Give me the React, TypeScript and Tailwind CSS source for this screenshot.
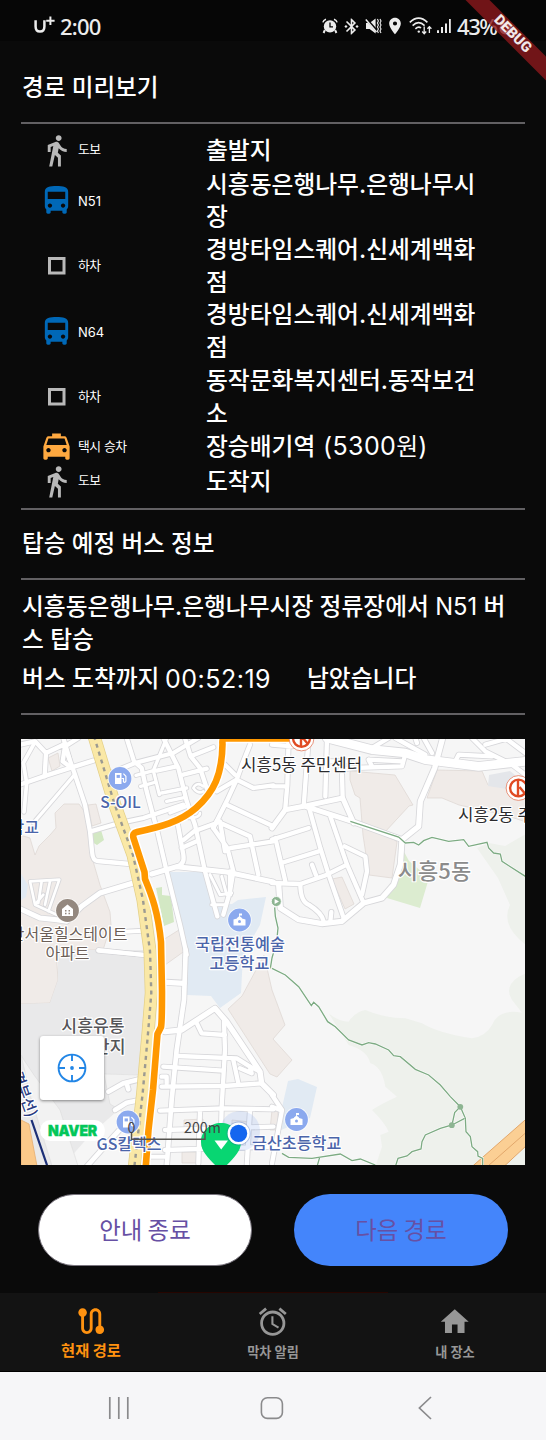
import React from "react";
import {
  MdAccessAlarm,
  MdBluetoothConnected,
  MdDirectionsBus,
  MdDirectionsWalk,
  MdHome,
  MdLocalTaxi,
  MdLocationOn,
  MdRoute,
} from "react-icons/md";

type Tile = "nw" | "ne" | "sw" | "se";
type Road = { t: Tile; d: string; w?: number };

const tileTransform: Record<Tile, string> = {
  nw: "translate(20 738) scale(0.33333)",
  ne: "translate(272 738) scale(0.33333)",
  sw: "translate(20 950) scale(0.33333)",
  se: "translate(272 950) scale(0.33333)",
};

const roads: Road[] = [
  { t: "nw", d: "M130 0L148 62L165 110L195 200L210 280L216 340Q218 368 232 369L330 378" },
  { t: "nw", d: "M0 140L80 112L165 85L220 68" },
  { t: "nw", d: "M162 112L100 185L40 255", w: 10 },
  { t: "nw", d: "M45 12L10 75L20 135L12 222", w: 11 },
  { t: "nw", d: "M0 20L45 10L78 45L74 115M78 45L135 18M175 0L135 25L148 62M135 25L128 70L148 85" },
  { t: "nw", d: "M320 0L342 70L365 90L380 160L412 280L440 400L480 560L500 650" },
  { t: "nw", d: "M265 108L345 75L460 45L535 0" },
  { t: "nw", d: "M430 0L475 90L500 190L525 260L555 400L592 535" },
  { t: "nw", d: "M348 112L400 98M362 145L408 132M440 0L400 98L418 170M425 165L500 150M440 190L495 178M450 225L500 205", w: 10 },
  { t: "nw", d: "M495 0L512 55L540 90L560 150M512 55L580 28M410 98L470 85M490 110L560 92" },
  { t: "nw", d: "M212 280L288 258M300 255L370 240L490 200" },
  { t: "nw", d: "M395 408L470 386L620 402L760 432", w: 15 },
  { t: "nw", d: "M470 386Q495 380 490 350L470 240M492 305L522 280L590 255M485 330L530 310" },
  { t: "nw", d: "M590 160L650 125L700 150L760 142M650 125L620 190L580 270M690 20L668 75L650 125M615 80L645 110" },
  { t: "nw", d: "M580 270L622 330L640 400L630 460L610 530M620 200L760 265M590 250L690 295L715 410M632 330L760 310M600 250L615 340M630 400L630 470" },
  { t: "nw", d: "M505 240Q540 240 540 225M550 160Q535 170 520 150Q530 130 550 145", w: 8 },
  { t: "nw", d: "M570 410L600 470L635 465M575 500L615 500M605 415L620 470", w: 9 },
  { t: "nw", d: "M340 435L240 465L185 505L140 550L110 545L60 540L0 512", w: 15 },
  { t: "nw", d: "M30 430L118 425L85 520M30 430L45 500L110 530M65 430L55 495M90 430L75 500M45 500L70 470", w: 8 },
  { t: "nw", d: "M300 582L370 578M235 638L370 650", w: 12 },
  { t: "ne", d: "M165 0L300 35L400 45L460 65L620 85L760 70", w: 26 },
  { t: "ne", d: "M0 20L60 25M50 0L46 140L40 210M110 0L95 205M165 0L160 175M105 70L230 70M210 110L212 180" },
  { t: "ne", d: "M0 270L40 215L95 205L212 180L245 255M100 205L240 250L390 305", w: 15 },
  { t: "ne", d: "M110 205L145 330L170 410L215 540M175 235L225 380L275 495" },
  { t: "ne", d: "M0 305L110 270M28 375L140 340M10 300L40 430M0 435L85 438L160 412L225 380M120 380L132 412" },
  { t: "ne", d: "M85 438Q85 490 110 500Q150 525 155 550M175 550L178 522" },
  { t: "ne", d: "M20 440L25 510L80 545L150 557L210 550L275 495L330 480L365 440L385 380L390 305L440 265L445 190L488 90L512 0", w: 16 },
  { t: "ne", d: "M218 325L280 355L285 400L270 470" },
  { t: "ne", d: "M205 95L240 90L390 85L400 48M290 65L390 70M290 65L300 85M0 145L45 145" },
  { t: "ne", d: "M300 30L350 0M430 0L435 15M455 0L480 45M550 70L560 50L660 55M600 0L640 40L720 80L760 110M640 20L710 0M370 0L460 50M700 0L760 45" },
  { t: "sw", d: "M497 0L492 150L470 300L455 450L440 650", w: 14 },
  { t: "sw", d: "M440 97L492 100M435 245L485 240L585 175L620 215L720 365L725 400L760 435", w: 16 },
  { t: "sw", d: "M528 215L545 250L615 255M612 215L615 300L605 470L600 650M475 318L650 325L690 350L720 365" },
  { t: "sw", d: "M430 350L610 362M425 410L610 408L725 400M640 330L655 400M690 350L695 370L660 355M425 380L440 380L440 400" },
  { t: "sw", d: "M420 482L610 475L760 478M435 540L760 530M435 600L760 590M540 480L535 640M690 480L680 650" },
  { t: "sw", d: "M265 425L310 400L370 385M320 400L325 418M285 480L320 458L360 450", w: 14 },
  { t: "sw", d: "M200 650L280 560L330 505", w: 14 },
  { t: "sw", d: "M235 0L370 15M380 620L440 620", w: 12 },
  { t: "se", d: "M0 435L30 480L15 560L0 640M0 470L25 480" },
];

const trails: { t: Tile; d: string }[] = [
  { t: "ne", d: "M235 250L380 297L400 315L425 313L440 321L455 308L480 298L530 310L575 305L590 325L645 313L650 330L665 345L685 348L690 370L760 415" },
  { t: "ne", d: "M8 508L10 535L18 570L14 610L0 660L-5 691" },
  { t: "se", d: "M0 55L40 75L80 110L118 167L125 157L140 170L167 215L190 230L230 270L270 285L290 278L310 282L350 300L365 317L385 320L430 358L470 375L505 405L535 440L565 470L580 505L582 545L595 560L600 590L617 605L618 618L632 625L632 650" },
  { t: "se", d: "M565 470L548 488L540 525L505 535L460 555L450 575L447 597L420 605L405 618L378 625L370 650M540 525L578 505" },
  { t: "se", d: "M30 610L50 622L120 625L205 612L240 632L265 627L310 645M143 622L135 650" },
];

const mainRoad = "M94 736L114.5 804L133 855L143 900L150 951L151.3 993L148.3 1030L142.7 1093L134 1170";
const routeLine =
  "M292 738.5L224 738.5Q222 739 222.5 744C222 775 214 792 196 808C180 822 160 827 137 832Q132 833 133.5 838L144.5 872L145 879C152 896 158 912 161 942L162 992Q162 1022 161 1027L157.5 1034L153 1090L148.5 1130L145.5 1170";

type Label = {
  s: string;
  x: number;
  y: number;
  size: number;
  color: string;
  anchor?: "start" | "middle" | "end";
  weight?: number;
};

const labels: Label[] = [
  { s: "시흥5동 주민센터", x: 241, y: 771, size: 16.8, color: "#2b2b2e", weight: 400 },
  { s: "시흥2동 주민센터", x: 458, y: 820.5, size: 16.8, color: "#2b2b2e", weight: 400 },
  { s: "시흥5동", x: 434.5, y: 878.5, size: 22, color: "#8b8b8b", anchor: "middle" },
  { s: "S-OIL", x: 120.5, y: 808, size: 15.6, color: "#4b65aa", anchor: "middle" },
  { s: "중학교", x: 39, y: 833, size: 16, color: "#4b65aa", anchor: "end" },
  { s: "벽산서울힐스테이트", x: 127.5, y: 939.5, size: 16, color: "#6b5e57", anchor: "end", weight: 400 },
  { s: "아파트", x: 67.5, y: 959, size: 16, color: "#6b5e57", anchor: "middle", weight: 400 },
  { s: "국립전통예술", x: 240, y: 949.5, size: 16.3, color: "#4b65aa", anchor: "middle" },
  { s: "고등학교", x: 239.5, y: 968.5, size: 16.3, color: "#4b65aa", anchor: "middle" },
  { s: "시흥유통", x: 93, y: 1031.5, size: 17.2, color: "#555558", anchor: "middle" },
  { s: "상가단지", x: 125.5, y: 1053, size: 17.2, color: "#555558", anchor: "end" },
  { s: "GS칼텍스", x: 129, y: 1150, size: 16, color: "#4b65aa", anchor: "middle" },
  { s: "금산초등학교", x: 252, y: 1148.5, size: 16.2, color: "#4b65aa" },
];

function Poi({ x, y, color, children }: { x: number; y: number; color: string; children: React.ReactNode }) {
  return (
    <g transform={`translate(${x} ${y})`}>
      <circle r="12.2" fill="#fff" opacity="0.8" />
      <circle r="11.4" fill={color} />
      {children}
    </g>
  );
}

function Pump() {
  return (
    <g>
      <path d="M-5 -5.5h6.5v11h-6.5z" fill="#fff" />
      <path d="M-3.4 -3.6h3.3v3h-3.3z" fill="#8ba9ee" />
      <path d="M1.5 0h2v3.2q1.8 1.4 2.4 -.6V-2.2L3.4 -4.8" fill="none" stroke="#fff" strokeWidth="1.2" />
    </g>
  );
}

function School() {
  return (
    <g fill="#fff">
      <path d="M-6 -.5L-2.5 -1.5V-2L0 -4L2.5 -2V-1.5L6 -.5V5.5H-6z" />
      <path d="M-.5 -6.5h3v2h-2.2v2h-.8z" />
      <circle cy="1.5" r="1.5" fill="#8ba9ee" />
    </g>
  );
}

function Office({ x, y }: { x: number; y: number }) {
  return (
    <g transform={`translate(${x} ${y})`}>
      <circle r="12.4" fill="#fff" stroke="#e2795a" strokeWidth=".8" />
      <circle r="8.4" fill="none" stroke="#e04a22" strokeWidth="2.4" />
      <path d="M-.5 -8V8M1 -1L6 5" stroke="#e04a22" strokeWidth="2.4" fill="none" />
    </g>
  );
}

function MapCanvas() {
  return (
    <svg className="block h-full w-full" viewBox="21 739 504 426" preserveAspectRatio="none">
      <rect x="21" y="739" width="504" height="427" fill="#f6f6f6" />
      {/* land use */}
      <g stroke="#ddd6d1" strokeWidth=".7" fill="#f0ebe8">
        <path d="M20 835L30 838L35 855L39 846L50 835L56 828L55 813L64 804L79 804L84 811L91 835L93 861L100 885L110 912L111 925L103 950L56 950L58 980L50 1003L20 1004Z" />
        <path d="M48 758L58 753L60 766L52 771ZM88 805L96 804L101 823L92 826Z" />
        <path d="M350 771L395 775L413 805L409 806L385 832L397 842L392 878L369 875L363 835L360 798L355 795L350 780Z" />
        <path d="M437 770L482 771L488 785L526 790V822L505 815L459 805L442 798L427 798Z" />
        <path d="M332 879L342 877L354 904L345 909Z" />
        <path d="M264 955L272 990L285 1025L273 1039L292 1060L277 1077L270 1074L228 1009L242 996L256 970Z" />
        <path d="M163 940L182 928L186 950L165 965ZM184 1120L203 1119V1132L184 1133ZM232 1120L250 1122V1132H232ZM182 1152H200V1163H182ZM272 1110H278V1130H270Z" />
      </g>
      <path d="M58 950L144 950L149 993L141 1075L106 1074L116 1112L90 1135L62 1167L21 1167V1004L50 1003L58 980Z" fill="#e9e9ea" />
      <path d="M21 1055L31 1098L52 1166L78 1166L60 1110L34 1075L24 1060ZM104 1074L141 1075L137 1120L110 1104Z" fill="#f2f2f2" stroke="#dcdcdc" strokeWidth=".6" />
      <path d="M168 872L204 872L213 904L232 904L238 900L266 897L260 925L243 955L241 993L220 1008L211 996L187 995L184 950Z" fill="#e1eaf3" />
      <path d="M288 1081L298 1079L317 1087L310 1118L281 1130L278 1125ZM20 872L28 885L26 897L20 901Z" fill="#e1eaf3" />
      <path d="M489 775L510 771L526 784V792L488 786Z" fill="#e4e6ea" />
      <path d="M92 834L101 830L104 840L97 845L92 842ZM156 888L162 887V895L171 896L174 922L164 926Z" fill="#d3e8c4" />
      <path d="M402 848L409 861L429 878L420 908L387 898Z" fill="#dcecd0" />
      <path d="M477 848L489 843L505 846L526 834V945Q500 925 510 905L498 878Z" fill="#eef1ec" />
      <path
        transform={tileTransform.se}
        d="M170 190Q200 215 230 215Q250 185 280 180Q340 205 400 205L450 220Q500 250 600 265Q640 260 660 225Q680 175 750 188L720 150Q695 110 740 80L762 70V650H310L330 590L325 555L350 545Q340 520 300 480Q330 460 375 440L340 410Q330 350 295 340Q285 300 230 285Z"
        fill="#eef1ec"
      />
      <path transform={tileTransform.se} d="M600 650L765 505V585L690 655Z" fill="#fbcf94" stroke="#e2a76a" strokeWidth="3" />
      <path transform={tileTransform.se} d="M640 655L765 545" stroke="#e2a76a" strokeWidth="3" />
      <path d="M21 1120L29 1124L37 1166H21Z" fill="#fbc98a" stroke="#e6ad70" strokeWidth=".8" />

      {/* streets: casing first, then surface */}
      <g fill="none" stroke="#d7d7da" strokeLinejoin="round">
        {roads.map((r, i) => (
          <path key={i} transform={tileTransform[r.t]} d={r.d} strokeWidth={(r.w ?? 13) + 5} strokeLinecap="round" />
        ))}
      </g>
      <g fill="none" stroke="#ffffff" strokeLinejoin="round">
        {roads.map((r, i) => (
          <path key={i} transform={tileTransform[r.t]} d={r.d} strokeWidth={r.w ?? 13} strokeLinecap="round" />
        ))}
      </g>

      {/* walking trails */}
      {trails.map((p, i) => (
        <g key={i} transform={tileTransform[p.t]} fill="none">
          <path d={p.d} stroke="#fff" strokeWidth="7" />
          <path d={p.d} stroke="#7dab83" strokeWidth="4" />
        </g>
      ))}
      <g fill="#8db592">
        <circle cx="460.3" cy="1106.8" r="2.9" />
        <circle cx="451.8" cy="1125.2" r="2.9" />
        <circle cx="276.3" cy="901.5" r="5" stroke="#fff" strokeWidth=".8" />
        <path d="M274.6 899L279 901.5L274.6 904Z" fill="#fff" />
      </g>

      {/* arterial road */}
      <g fill="none">
        <path d={mainRoad} stroke="#e3cf87" strokeWidth="13" />
        <path d={mainRoad} stroke="#fae8a6" strokeWidth="11.6" />
        <path d={mainRoad} stroke="#9c9a91" strokeWidth="2.4" strokeDasharray="4 4.2" />
      </g>

      {/* railway */}
      <path d="M31.5 1120L48 1168" stroke="#1c2f77" strokeWidth="2.2" />

      {/* guidance route */}
      <g fill="none" strokeLinejoin="round">
        <path d={routeLine} stroke="#fff" strokeWidth="9.5" />
        <path d={routeLine} stroke="#ff9800" strokeWidth="6.6" />
      </g>

      <Poi x={120} y={778.5} color="#8ba9ee">
        <Pump />
      </Poi>
      <Poi x={128} y={1122} color="#8ba9ee">
        <Pump />
      </Poi>
      <Poi x={239.5} y={920} color="#8ba9ee">
        <School />
      </Poi>
      <Poi x={296.5} y={1119.5} color="#8ba9ee">
        <School />
      </Poi>
      <Poi x={67.5} y={910.5} color="#94887f">
        <path d="M-5.5 5.5V-1.5L0 -6L5.5 -1.5V5.5Z" fill="#fff" />
        <path d="M-2.5 -.5h1.5v1.5h-1.5zM1 -.5h1.5v1.5H1zM-2.5 2.3h1.5v1.5h-1.5zM1 2.3h1.5v1.5H1z" fill="#94887f" />
      </Poi>
      <Office x={301.5} y={738.5} />
      <Office x={518.5} y={788} />

      <g fontFamily="'Noto Sans CJK KR', sans-serif" stroke="#ffffff" strokeWidth="2.4" strokeLinejoin="round" style={{ paintOrder: "stroke" }}>
        {labels.map((l) => (
          <text key={l.s + l.x} x={l.x} y={l.y} fontSize={l.size} fontWeight={l.weight ?? 500} fill={l.color} textAnchor={l.anchor ?? "start"}>
            {l.s}
          </text>
        ))}
        <text transform="translate(11.5 1074) rotate(70)" fontSize="15" fontWeight="500" fill="#2b3c82">
          경부선)
        </text>
      </g>

      {/* destination marker and current position */}
      <circle cx="240" cy="1131" r="20" fill="#3b74e8" opacity=".12" />
      <path d="M201 1142C201 1131 210 1123 221 1123S241 1131 241 1142C241 1154 230 1160 221 1172C212 1160 201 1154 201 1142Z" fill="#08d672" />
      <path d="M214.5 1140.5H228L221.2 1149.5Z" fill="#fff" />
      <circle cx="238.6" cy="1133.4" r="12" fill="#1c4fb0" opacity=".25" />
      <circle cx="238.6" cy="1133.4" r="11" fill="#fff" />
      <circle cx="238.6" cy="1133.4" r="8.6" fill="#1466ef" />

      {/* scale bar */}
      <path d="M131.5 1133V1139.2H205V1133" fill="none" stroke="#55534f" strokeWidth="1.5" />
      <g fontFamily="'Noto Sans CJK KR', sans-serif" fontSize="14.2" fill="#444446">
        <text x="131.5" y="1132.5" textAnchor="middle">
          0
        </text>
        <text x="202.5" y="1132.5" textAnchor="middle">
          200m
        </text>
      </g>
    </svg>
  );
}

type Kind = "walk" | "bus" | "off" | "taxi";
const steps: { kind: Kind; label: string; place: string; fare?: string }[] = [
  { kind: "walk", label: "도보", place: "출발지" },
  { kind: "bus", label: "N51", place: "시흥동은행나무.은행나무시장" },
  { kind: "off", label: "하차", place: "경방타임스퀘어.신세계백화점" },
  { kind: "bus", label: "N64", place: "경방타임스퀘어.신세계백화점" },
  { kind: "off", label: "하차", place: "동작문화복지센터.동작보건소" },
  { kind: "taxi", label: "택시 승차", place: "장승배기역", fare: "5300" },
  { kind: "walk", label: "도보", place: "도착지" },
];

function StepIcon({ kind }: { kind: Kind }) {
  if (kind === "walk") return <MdDirectionsWalk className="-my-px size-[35px] text-[#b9b9b9]" />;
  if (kind === "bus") return <MdDirectionsBus className="-my-px size-[35px] text-[#0068b7]" />;
  if (kind === "taxi") return <MdLocalTaxi className="-my-px size-[35px] text-[#ffa940]" />;
  return (
    <svg className="-my-px size-[35px]" viewBox="0 0 35 35" fill="none" stroke="#b9b9b9" strokeWidth="3">
      <rect x="10.5" y="10.5" width="14.5" height="14.5" />
    </svg>
  );
}

function StatusBar() {
  return (
    <header className="relative h-[41px] shrink-0 bg-[#060606] font-['Noto_Sans','Noto_Sans_CJK_KR',sans-serif] font-medium text-[#ececec]">
      <div className="flex h-full items-center pt-[11px] pl-[34px]">
        <span className="flex w-[26px] items-center">
          <svg className="h-[20px] w-[22px]" viewBox="0 0 22 20" fill="none" stroke="currentColor">
            <path d="M1.6 4.2V10.5Q1.6 15.6 6 15.6T10.4 10.5V4.2" strokeWidth="2.5" />
            <path d="M16.4 .6V9M12.2 4.8H20.6" strokeWidth="2" />
          </svg>
        </span>
        <span className="w-[262px] text-[22px] leading-none tracking-[-0.8px]">2:00</span>
        <svg className="h-[16px] w-[16px]" viewBox="0 0 16 16" fill="currentColor">
          <circle cx="8" cy="8.4" r="6.2" />
          <path d="M2.8 12.2L1.6 15M13.2 12.2L14.4 15" stroke="currentColor" strokeWidth="2" />
          <path d="M.9 4.4Q1.4 2 4 1.2M15.1 4.4Q14.6 2 12 1.2" fill="none" stroke="currentColor" strokeWidth="1.5" />
          <path d="M8 4.6V8.8H11" fill="none" stroke="#060606" strokeWidth="1.3" />
        </svg>
        <MdBluetoothConnected className="ml-[4px] size-[19px]" />
        <svg className="ml-[4px] h-[16px] w-[17px]" viewBox="0 0 17 16" fill="currentColor">
          <path d="M1 5H4.6L10.6 .6V15.4L4.6 11H1Z" />
          <path d="M.6 .2L12.5 13.6" stroke="#060606" strokeWidth="2.6" />
          <path d="M.8 1.4L11.5 14" stroke="currentColor" strokeWidth="1.5" />
          <path d="M12.4 1L13.4 3L12.4 5L13.4 7L12.4 9L13.4 11L12.4 13L13.4 15M15 1L16 3L15 5L16 7L15 9L16 11L15 13L16 15" fill="none" stroke="currentColor" strokeWidth="1.1" />
        </svg>
        <MdLocationOn className="ml-[3px] size-[20px]" />
        <svg className="ml-[4px] h-[18px] w-[23px]" viewBox="0 0 23 18" fill="none" stroke="currentColor">
          <path d="M.8 5.4Q9.6 -3 18.4 5.4M3.6 8.6Q9.6 2.8 15.6 8.6M6.4 11.8Q9.6 8.8 12 11" strokeWidth="1.6" />
          <circle cx="9.8" cy="14.6" r="1.2" fill="currentColor" stroke="none" />
          <path d="M15.2 9.5V16.5M13.2 14.5L15.2 16.7L17.2 14.5M20.4 16V9.8M18.4 11.8L20.4 9.6L22.4 11.8" strokeWidth="1.3" />
        </svg>
        <svg className="ml-[4px] h-[16px] w-[16px]" viewBox="0 0 16 16" fill="currentColor">
          <path d="M1 12.2h2V15H1zM5 9h2v6H5zM9 5.5h2V15H9zM13 1h1.8v14H13z" />
        </svg>
        <span className="ml-[5px] w-[40px] text-[22px] leading-none tracking-[-1.4px] whitespace-nowrap">43%</span>
        <svg className="mt-[4px] ml-[2px] size-[13px]" viewBox="0 0 13 13">
          <circle cx="6.5" cy="6.5" r="6" fill="#ececec" />
          <path d="M7.4 2.4L3.6 7.2H6.2L5.4 10.8L9.4 5.8H6.8Z" fill="#5b1113" />
        </svg>
      </div>
    </header>
  );
}

function Rule() {
  return <div className="h-[2px] shrink-0 bg-[#626063]" />;
}

export default function App() {
  return (
    <div className="relative flex h-[1440px] w-[546px] flex-col overflow-hidden bg-[#0a0a0a] font-['Inter','Noto_Sans_CJK_KR',sans-serif] text-white">
      <StatusBar />
      <div className="absolute top-[25.5px] left-[442px] flex h-[17px] w-[140px] rotate-45 items-center justify-center bg-[#8b181b]/80">
        <span className="text-[14.5px] leading-none font-black text-white/90 font-['Roboto',sans-serif]">DEBUG</span>
      </div>

      <main className="flex h-[1251px] shrink-0 flex-col px-[21px]">
        <h1 className="flex h-[81px] items-center pt-[13px] pl-px text-[23.6px] leading-[32.7px] font-medium">경로 미리보기</h1>
        <Rule />
        <ul className="flex h-[384px] flex-col pt-[9px]">
          {steps.map((s, i) => (
            <li key={i} className="flex min-h-[34.6px] items-center pl-[18px]">
              <StepIcon kind={s.kind} />
              <span
                className={
                  s.kind === "bus"
                    ? "w-[132px] pt-[2px] pl-[4px] text-[13px] leading-none"
                    : "w-[132px] pt-px pl-[4px] text-[12.8px] leading-none tracking-[-0.4px]"
                }
              >
                {s.label}
              </span>
              <span className="relative top-px w-[279px] text-[23.75px] leading-[32.7px] font-medium break-all">
                {s.place}
                {s.fare && (
                  <span className="font-normal">
                    {" "}
                    <span className="ml-px text-[25px] leading-none tracking-[0.4px]">({s.fare}</span>원
                    <span className="text-[25px] leading-none">)</span>
                  </span>
                )}
              </span>
            </li>
          ))}
        </ul>
        <Rule />
        <h2 className="flex h-[68px] items-center pl-px text-[23.6px] font-medium">탑승 예정 버스 정보</h2>
        <Rule />
        <div className="h-[133px] pt-[11px] pl-px text-[23.75px] leading-[32.7px] font-medium">
          <p className="w-[494px] break-all">
            시흥동은행나무.은행나무시장 정류장에서 <span className="font-normal">N51</span> 버스 탑승
          </p>
          <div className="flex pt-[7px]">
            <span className="w-[143px] whitespace-nowrap">버스 도착까지</span>
            <span className="w-[142px] text-[25px] font-normal tracking-[0.5px]">00:52:19</span>
            <span>남았습니다</span>
          </div>
        </div>
        <Rule />
        <section className="relative mt-[24px] h-[426px] w-[504px] shrink-0 overflow-hidden">
          <MapCanvas />
          <button className="absolute top-[297px] left-[19px] flex size-[64px] items-center justify-center rounded-[3px] bg-white shadow-[0_1px_3px_rgba(0,0,0,0.45)]">
            <svg className="size-[30px]" viewBox="0 0 30 30" fill="none" stroke="#2286e6" strokeWidth="1.9">
              <circle cx="15" cy="15" r="13.4" />
              <path d="M15 1.5V8M15 22V28.5M1.5 15H8M22 15H28.5" />
              <circle cx="15" cy="15" r="1.9" fill="#2286e6" stroke="none" />
            </svg>
          </button>
          <div className="absolute top-[381px] left-[19px] flex h-[21px] w-[65px] items-center justify-center rounded-full bg-white">
            <span className="text-[14px] leading-none font-black tracking-[-0.1px] text-[#03c75a] [-webkit-text-stroke:0.4px_#03c75a]">NAVER</span>
          </div>
        </section>
        <div className="mt-[29px] flex justify-between px-[17px] font-['Noto_Sans_CJK_KR',sans-serif] text-[23.4px] text-[#6750a4]">
          <button className="h-[71.5px] w-[214px] rounded-full border-[1.5px] border-[#79747e] bg-white">안내 종료</button>
          <button className="h-[71.5px] w-[214px] rounded-full bg-[#4485fb]">다음 경로</button>
        </div>
      </main>

      <div className="mx-[158px] h-px shrink-0 bg-[#260500]" />
      <nav className="grid h-[79px] shrink-0 grid-cols-3 border-b border-black bg-[#131313] font-['Noto_Sans_CJK_KR',sans-serif] font-bold text-[#979797]">
        <div className="flex flex-col items-center pt-[11px] text-[#ff9210]">
          <MdRoute className="size-[34.4px]" />
          <span className="mt-[3px] text-[15.3px] leading-[16px]">현재 경로</span>
        </div>
        <div className="flex flex-col items-center pt-[12px]">
          <MdAccessAlarm className="size-[33.5px]" />
          <span className="mt-[5px] text-[13.2px] leading-[16px]">막차 알림</span>
        </div>
        <div className="flex flex-col items-center pt-[12px]">
          <MdHome className="size-[33.5px]" />
          <span className="mt-[5px] text-[13.2px] leading-[16px]">내 장소</span>
        </div>
      </nav>
      <footer className="flex h-[68px] shrink-0 items-center bg-[#f6f6f8] pt-[4px] pl-[107px] text-[#8a8a8c]">
        <svg className="h-[24px] w-[24px]" viewBox="0 0 24 24" stroke="currentColor" strokeWidth="1.7">
          <path d="M2.8 1V23M11.8 1V23M20.8 1V23" />
        </svg>
        <svg className="ml-[128.5px] h-[24px] w-[24px]" viewBox="0 0 24 24" fill="none" stroke="currentColor" strokeWidth="1.6">
          <rect x="1.4" y="1.8" width="21" height="20.6" rx="6" />
        </svg>
        <svg className="ml-[134.5px] h-[24px] w-[14px]" viewBox="0 0 14 24" fill="none" stroke="currentColor" strokeWidth="1.7">
          <path d="M13 1L1.4 12L13 23" />
        </svg>
      </footer>
    </div>
  );
}
